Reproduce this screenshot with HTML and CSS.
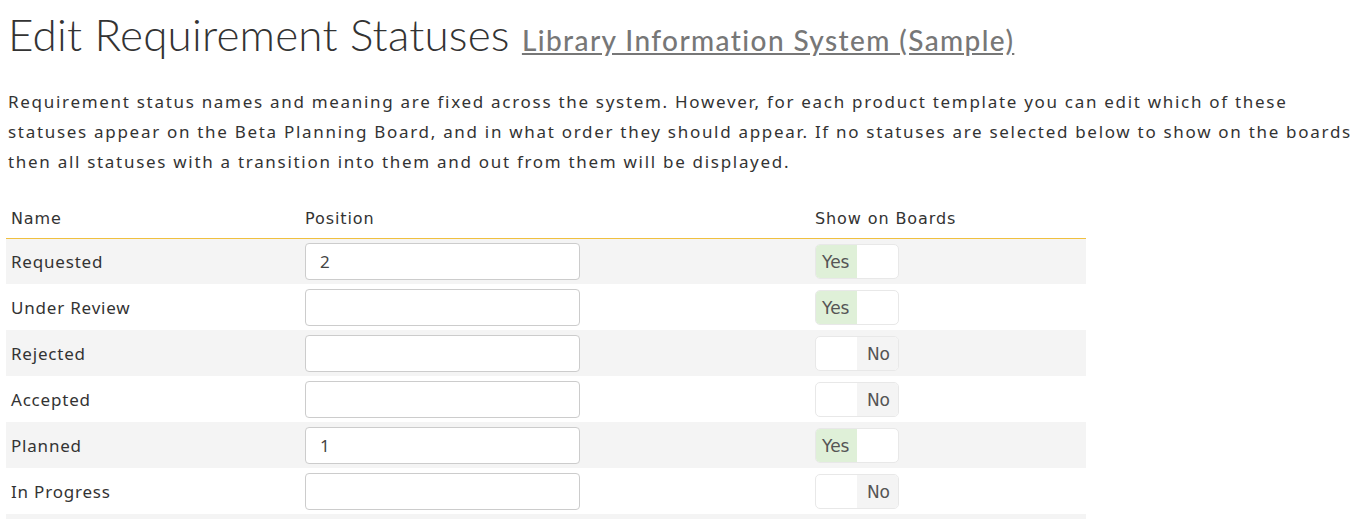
FILE: index.html
```html
<!DOCTYPE html>
<html>
<head>
<meta charset="utf-8">
<link rel="stylesheet" href="styles.css">
</head>
<body>
<h1 class="title">Edit Requirement Statuses <a class="product" href="#">Library Information System (Sample)</a></h1>
<p class="intro">Requirement status names and meaning are fixed across the system. However, for each product template you can edit which of these statuses appear on the Beta Planning Board, and in what order they should appear. If no statuses are selected below to show on the boards then all statuses with a transition into them and out from them will be displayed.</p>
<table class="grid">
  <thead>
    <tr><th class="c-name">Name</th><th class="c-pos">Position</th><th class="c-show">Show on Boards</th></tr>
  </thead>
  <tbody>
    <tr><td>Requested</td><td><input class="pos" type="text" value="2"></td><td><span class="toggle on"><span class="yes">Yes</span><span class="no"></span></span></td></tr>
    <tr><td>Under Review</td><td><input class="pos" type="text" value=""></td><td><span class="toggle on"><span class="yes">Yes</span><span class="no"></span></span></td></tr>
    <tr><td>Rejected</td><td><input class="pos" type="text" value=""></td><td><span class="toggle off"><span class="yes"></span><span class="no">No</span></span></td></tr>
    <tr><td>Accepted</td><td><input class="pos" type="text" value=""></td><td><span class="toggle off"><span class="yes"></span><span class="no">No</span></span></td></tr>
    <tr><td>Planned</td><td><input class="pos" type="text" value="1"></td><td><span class="toggle on"><span class="yes">Yes</span><span class="no"></span></span></td></tr>
    <tr><td>In Progress</td><td><input class="pos" type="text" value=""></td><td><span class="toggle off"><span class="yes"></span><span class="no">No</span></span></td></tr>
    <tr class="more"><td></td><td></td><td></td></tr>
  </tbody>
</table>
</body>
</html>
```
FILE: styles.css
```css
html, body { margin: 0; padding: 0; background: #fff; }
body {
  padding: 0 6px 0 8px;
  font-family: "Noto Sans", sans-serif;
  color: #333;
}
.title {
  margin: 0;
  padding-top: 7px;
  height: 65px;
  font-family: "Lato", sans-serif;
  font-weight: 300;
  font-size: 44px;
  line-height: 54px;
  letter-spacing: 0.2px;
  color: #333;
  white-space: nowrap;
}
.product {
  font-family: "Lato", sans-serif;
  font-weight: 500;
  font-size: 28px;
  letter-spacing: 1.4px;
  color: #777;
  text-decoration: underline;
}
.intro {
  margin: 15px 0 0;
  font-size: 17px;
  line-height: 30px;
  letter-spacing: 1.7px;
  color: #333;
}
.grid {
  margin: 24px 0 0 -2px;
  border-collapse: collapse;
  width: 1080px;
  table-layout: fixed;
}
.grid th, .grid td { box-sizing: border-box; }
.grid th {
  text-align: left;
  font-family: "DejaVu Sans", sans-serif;
  font-weight: normal;
  font-size: 16px;
  letter-spacing: 0.9px;
  color: #333;
  height: 37px;
  padding: 0 5px 2px;
  border-bottom: 1px solid #f0c040;
  vertical-align: middle;
}
.c-name { width: 294px; }
.c-pos { width: 510px; }
.c-show { width: 276px; }
.grid td {
  height: 46px;
  padding: 0 5px;
  font-size: 17px;
  letter-spacing: 0.8px;
  color: #333;
  vertical-align: middle;
}
.grid tbody tr:nth-child(odd) td { background: #f4f4f4; }
.pos {
  display: block;
  box-sizing: border-box;
  width: 275px;
  height: 37px;
  margin: 0;
  padding: 0 14px;
  border: 1px solid #ccc;
  border-radius: 4px;
  background: #fff;
  font-family: "Noto Sans", sans-serif;
  font-size: 17px;
  color: #444;
}
.toggle {
  display: flex;
  box-sizing: border-box;
  width: 84px;
  height: 35px;
  border: 1px solid #e8e8e8;
  border-radius: 5px;
  overflow: hidden;
  background: #fff;
  font-family: "DejaVu Sans", sans-serif;
  font-size: 17px;
  letter-spacing: 0;
  color: #555;
}
.toggle .yes, .toggle .no {
  width: 42px;
  display: flex;
  align-items: center;
  box-sizing: border-box;
  padding-top: 2px;
}
.toggle .yes { padding-left: 6px; }
.toggle .no { justify-content: flex-end; padding-right: 8px; }
.toggle.on .yes { background: #dff0d8; }
.toggle.off .no { background: #f4f4f4; }
```
